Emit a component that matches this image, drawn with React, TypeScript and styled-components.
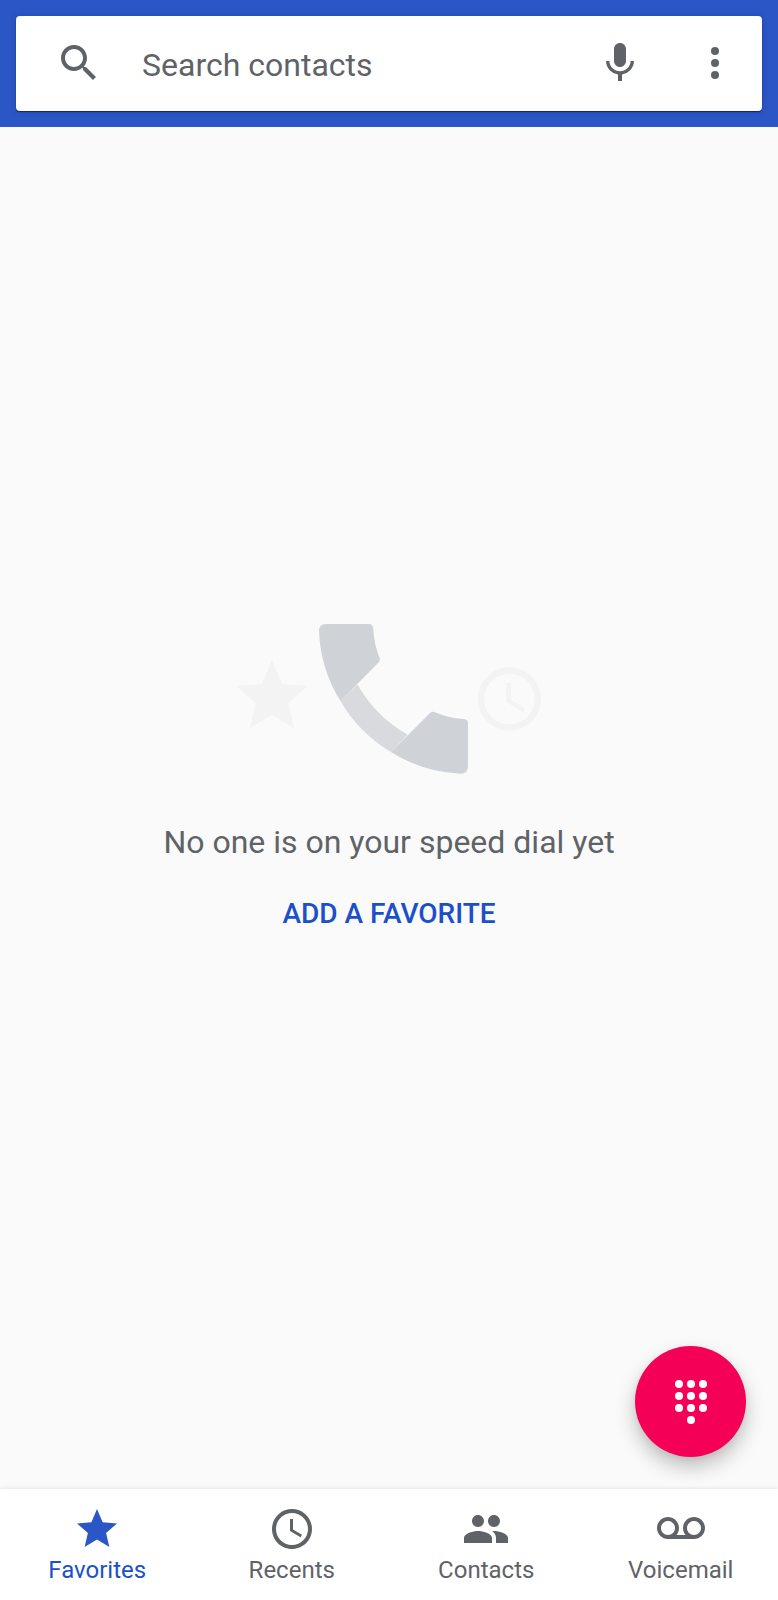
import React, { useState } from "react";
import styled, { createGlobalStyle } from "styled-components";

const color = {
  primary: "#2a56c6",
  link: "#1c50c8",
  ink: "#5f6368",
  surface: "#ffffff",
  page: "#fafafa",
  accent: "#f50057",
};

const GlobalStyle = createGlobalStyle`
  *, *::before, *::after { box-sizing: border-box; }
  body {
    margin: 0;
    background: ${color.page};
    color: ${color.ink};
    font-family: Roboto, "Noto Sans", sans-serif;
  }
  button, input { font: inherit; color: inherit; }
  button { border: 0; padding: 0; background: none; cursor: pointer; }
`;

const Screen = styled.div`
  display: flex;
  flex-direction: column;
  min-height: 100vh;
`;

const Header = styled.header`
  padding: 16px;
  background: ${color.primary};
`;

const SearchBar = styled.form`
  display: flex;
  align-items: center;
  padding: 23px 23px 24px 39px;
  border-radius: 4px;
  background: ${color.surface};
  box-shadow: 0 1px 1px rgba(0, 0, 120, 0.6), 0 1px 6px rgba(0, 0, 0, 0.16);
`;

const SearchLabel = styled.label`
  display: flex;
  flex: 1;
  align-items: center;
  gap: 39px;
  min-width: 0;
`;

const SearchInput = styled.input`
  flex: 1;
  min-width: 0;
  height: 48px;
  padding: 3px 0 0;
  border: 0;
  outline: 0;
  background: none;
  font-size: 32px;

  &::placeholder {
    color: ${color.ink};
    opacity: 1;
  }
`;

const BarActions = styled.div`
  display: flex;
  gap: 47px;
`;

const IconButton = styled.button`
  display: flex;
`;

const Icon = styled.svg`
  display: block;
  flex: none;
  width: 48px;
  height: 48px;
  fill: currentColor;
`;

const Content = styled.main`
  display: flex;
  flex: 1;
  flex-direction: column;
  align-items: center;
  justify-content: center;
  padding-bottom: 58px;
`;

const Illustration = styled.svg`
  display: block;
  width: 306px;
  height: 150px;
`;

const EmptyMessage = styled.p`
  margin: 48px 0 0;
  font-size: 32px;
  line-height: 40px;
`;

const TextButton = styled.button`
  margin-top: 32px;
  color: ${color.link};
  font-size: 28px;
  font-weight: 500;
  line-height: 40px;
`;

const BottomArea = styled.div`
  position: sticky;
  bottom: 0;
`;

const DialButton = styled.button`
  position: absolute;
  right: 32px;
  bottom: 143px;
  display: flex;
  align-items: center;
  justify-content: center;
  width: 111px;
  height: 111px;
  border-radius: 50%;
  background: ${color.accent};
  color: ${color.surface};
  box-shadow: 0 10px 20px rgba(0, 0, 0, 0.24), 0 2px 6px rgba(0, 0, 0, 0.06);
`;

const NavBar = styled.nav`
  display: flex;
  height: 111px;
  background: ${color.surface};
  box-shadow: 0 -1px 4px rgba(0, 0, 0, 0.08);
`;

const NavItem = styled.button<{ $active: boolean }>`
  display: flex;
  flex: 1;
  flex-direction: column;
  align-items: center;
  gap: 1px;
  padding-top: 16px;
  color: ${({ $active }) => ($active ? color.link : color.ink)};
  font-size: 24px;
  line-height: 32px;

  svg {
    color: ${({ $active }) => ($active ? color.primary : color.ink)};
  }
`;

const starPath =
  "M12 17.27 18.18 21l-1.64-7.03L22 9.24l-7.19-.61L12 2 9.19 8.63 2 9.24l5.46 4.73L5.82 21z";
const clockPath =
  "M11.99 2C6.47 2 2 6.48 2 12s4.47 10 9.99 10C17.52 22 22 17.52 22 12S17.52 2 11.99 2zM12 20c-4.42 0-8-3.58-8-8s3.58-8 8-8 8 3.58 8 8-3.58 8-8 8zm.5-13H11v6l5.25 3.15.75-1.23-4.5-2.67z";

const tabs = [
  { name: "Favorites", path: starPath },
  { name: "Recents", path: clockPath },
  {
    name: "Contacts",
    path: "M16 11c1.66 0 2.99-1.34 2.99-3S17.66 5 16 5s-3 1.34-3 3 1.34 3 3 3zm-8 0c1.66 0 2.99-1.34 2.99-3S9.66 5 8 5 5 6.34 5 8s1.34 3 3 3zm0 2c-2.33 0-7 1.17-7 3.5V19h14v-2.5c0-2.33-4.67-3.5-7-3.5zm8 0c-.29 0-.62.02-.97.05 1.16.84 1.97 1.97 1.97 3.45V19h6v-2.5c0-2.33-4.67-3.5-7-3.5z",
  },
  {
    name: "Voicemail",
    path: "M18.5 6C15.46 6 13 8.46 13 11.5c0 1.33.47 2.55 1.26 3.5H9.74c.79-.95 1.26-2.17 1.26-3.5C11 8.46 8.54 6 5.5 6S0 8.46 0 11.5 2.46 17 5.5 17h13c3.04 0 5.5-2.46 5.5-5.5S21.54 6 18.5 6zm-13 9C3.57 15 2 13.43 2 11.5S3.57 8 5.5 8 9 9.57 9 11.5 7.43 15 5.5 15zm13 0c-1.93 0-3.5-1.57-3.5-3.5S16.57 8 18.5 8 22 9.57 22 11.5 20.43 15 18.5 15z",
  },
];

const dialDots = [3, 9, 15].flatMap((y) => [6, 12, 18].map((x) => ({ x, y })));

export default function App() {
  const [active, setActive] = useState("Favorites");
  const [query, setQuery] = useState("");

  return (
    <Screen>
      <GlobalStyle />
      <Header>
        <SearchBar role="search" onSubmit={(event) => event.preventDefault()}>
          <SearchLabel>
            <Icon viewBox="0 0 24 24" aria-hidden="true">
              <path d="M15.5 14h-.79l-.28-.27C15.41 12.59 16 11.11 16 9.5 16 5.91 13.09 3 9.5 3S3 5.91 3 9.5 5.91 16 9.5 16c1.61 0 3.09-.59 4.23-1.57l.27.28v.79l5 4.99L20.49 19l-4.99-5zm-6 0C7.01 14 5 11.99 5 9.5S7.01 5 9.5 5 14 7.01 14 9.5 11.99 14 9.5 14z" />
            </Icon>
            <SearchInput
              type="text"
              aria-label="Search contacts"
              placeholder="Search contacts"
              value={query}
              onChange={(event) => setQuery(event.target.value)}
            />
          </SearchLabel>
          <BarActions>
            <IconButton type="button" aria-label="Voice search">
              <Icon viewBox="0 0 24 24" aria-hidden="true">
                <path d="M12 14c1.66 0 2.99-1.34 2.99-3L15 5c0-1.66-1.34-3-3-3S9 3.34 9 5v6c0 1.66 1.34 3 3 3zm5.3-3c0 3-2.54 5.1-5.3 5.1S6.7 14 6.7 11H5c0 3.41 2.72 6.23 6 6.72V21h2v-3.28c3.28-.48 6-3.3 6-6.72h-1.7z" />
              </Icon>
            </IconButton>
            <IconButton type="button" aria-label="More options">
              <Icon viewBox="0 0 24 24" aria-hidden="true">
                <circle cx="12" cy="6" r="2" />
                <circle cx="12" cy="12" r="2" />
                <circle cx="12" cy="18" r="2" />
              </Icon>
            </IconButton>
          </BarActions>
        </SearchBar>
      </Header>

      <Content>
        <Illustration viewBox="0 0 306 150" aria-hidden="true">
          <g fill="#f3f3f3">
            <path transform="translate(-7 29) scale(3.58)" d={starPath} />
            <path transform="translate(235.5 37) scale(3.16)" d={clockPath} />
          </g>
          <path
            fill="#d8dadd"
            d="M104.5 77A142 142 0 0 0 155 128L171.5 110.500Q140 93 121.500 60.500z"
          />
          <g fill="#cfd2d7">
            <path d="M90 0H133Q137 0 137.300 5Q138 20 143.600 34Q144.500 36.500 143 38L104.500 77A142 142 0 0 1 83 7Q83 0 90 0z" />
            <path d="M194 89Q196 87 198.500 88Q212 94 227 95Q232 95 232 99V142Q232 150 224 149.700A142 142 0 0 1 155 128z" />
          </g>
        </Illustration>
        <EmptyMessage>No one is on your speed dial yet</EmptyMessage>
        <TextButton type="button">ADD A FAVORITE</TextButton>
      </Content>

      <BottomArea>
        <DialButton type="button" aria-label="Open dial pad">
          <Icon viewBox="0 0 24 24" aria-hidden="true">
            {dialDots.map(({ x, y }) => (
              <circle key={`${x}-${y}`} cx={x} cy={y} r="2" />
            ))}
            <circle cx="12" cy="21" r="2" />
          </Icon>
        </DialButton>
        <NavBar aria-label="Main">
          {tabs.map(({ name, path }) => (
            <NavItem
              key={name}
              type="button"
              $active={name === active}
              aria-current={name === active ? "page" : undefined}
              onClick={() => setActive(name)}
            >
              <Icon viewBox="0 0 24 24" aria-hidden="true">
                <path d={path} />
              </Icon>
              {name}
            </NavItem>
          ))}
        </NavBar>
      </BottomArea>
    </Screen>
  );
}
